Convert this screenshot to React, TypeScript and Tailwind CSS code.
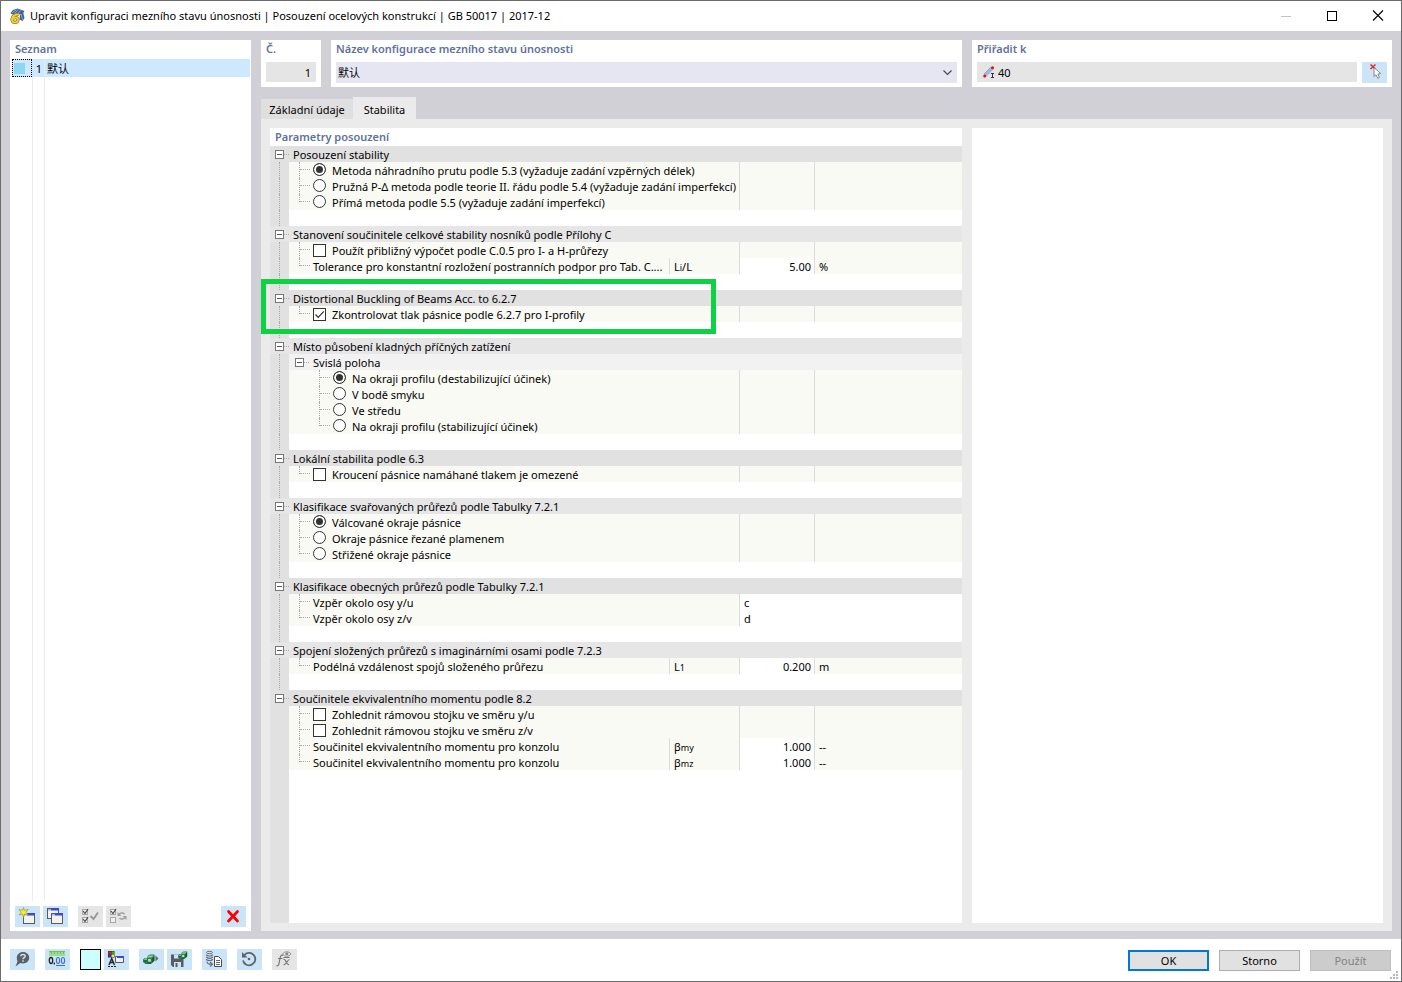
import React, { useState } from 'react';

type Control = 'radio' | 'check' | 'value' | 'wide' | 'node';

type Item = {
  kind: Control;
  label: string;
  on?: boolean;
  depth?: 1 | 2;
  last?: boolean;
  symbol?: React.ReactNode;
  value?: string;
  unit?: string;
};

type Group = { title: string; items: Item[]; highlighted?: boolean };

const groups: Group[] = [
  {
    title: 'Posouzení stability',
    items: [
      { kind: 'radio', label: 'Metoda náhradního prutu podle 5.3 (vyžaduje zadání vzpěrných délek)', on: true },
      { kind: 'radio', label: 'Pružná P-Δ metoda podle teorie II. řádu podle 5.4 (vyžaduje zadání imperfekcí)' },
      { kind: 'radio', label: 'Přímá metoda podle 5.5 (vyžaduje zadání imperfekcí)', last: true },
    ],
  },
  {
    title: 'Stanovení součinitele celkové stability nosníků podle Přílohy C',
    items: [
      { kind: 'check', label: 'Použít přibližný výpočet podle C.0.5 pro I- a H-průřezy' },
      {
        kind: 'value',
        label: 'Tolerance pro konstantní rozložení postranních podpor pro Tab. C....',
        symbol: <>L<Sub>i</Sub>/L</>,
        value: '5.00',
        unit: '%',
        last: true,
      },
    ],
  },
  {
    title: 'Distortional Buckling of Beams Acc. to 6.2.7',
    highlighted: true,
    items: [{ kind: 'check', label: 'Zkontrolovat tlak pásnice podle 6.2.7 pro I-profily', on: true, last: true }],
  },
  {
    title: 'Místo působení kladných příčných zatížení',
    items: [
      { kind: 'node', label: 'Svislá poloha' },
      { kind: 'radio', depth: 2, label: 'Na okraji profilu (destabilizující účinek)', on: true },
      { kind: 'radio', depth: 2, label: 'V bodě smyku' },
      { kind: 'radio', depth: 2, label: 'Ve středu' },
      { kind: 'radio', depth: 2, label: 'Na okraji profilu (stabilizující účinek)', last: true },
    ],
  },
  {
    title: 'Lokální stabilita podle 6.3',
    items: [{ kind: 'check', label: 'Kroucení pásnice namáhané tlakem je omezené', last: true }],
  },
  {
    title: 'Klasifikace svařovaných průřezů podle Tabulky 7.2.1',
    items: [
      { kind: 'radio', label: 'Válcované okraje pásnice', on: true },
      { kind: 'radio', label: 'Okraje pásnice řezané plamenem' },
      { kind: 'radio', label: 'Střižené okraje pásnice', last: true },
    ],
  },
  {
    title: 'Klasifikace obecných průřezů podle Tabulky 7.2.1',
    items: [
      { kind: 'wide', label: 'Vzpěr okolo osy y/u', value: 'c' },
      { kind: 'wide', label: 'Vzpěr okolo osy z/v', value: 'd', last: true },
    ],
  },
  {
    title: 'Spojení složených průřezů s imaginárními osami podle 7.2.3',
    items: [
      {
        kind: 'value',
        label: 'Podélná vzdálenost spojů složeného průřezu',
        symbol: <>L<Sub>1</Sub></>,
        value: '0.200',
        unit: 'm',
        last: true,
      },
    ],
  },
  {
    title: 'Součinitele ekvivalentního momentu podle 8.2',
    items: [
      { kind: 'check', label: 'Zohlednit rámovou stojku ve směru y/u' },
      { kind: 'check', label: 'Zohlednit rámovou stojku ve směru z/v' },
      { kind: 'value', label: 'Součinitel ekvivalentního momentu pro konzolu', symbol: <>β<Sub>my</Sub></>, value: '1.000', unit: '--' },
      { kind: 'value', label: 'Součinitel ekvivalentního momentu pro konzolu', symbol: <>β<Sub>mz</Sub></>, value: '1.000', unit: '--', last: true },
    ],
  },
];

function Sub({ children }: { children: React.ReactNode }) {
  return <span className="text-[9px]">{children}</span>;
}

function Expander({ label }: { label: string }) {
  return (
    <button
      type="button"
      aria-label={`Sbalit ${label}`}
      className="flex size-[9px] shrink-0 items-center justify-center border border-[#767676] bg-white"
    >
      <span className="h-px w-[5px] bg-[#555]" />
    </button>
  );
}

function Gutter({ line }: { line: boolean }) {
  return (
    <td className="bg-[#e1e1e1] p-0">
      <div className="flex h-4 pl-[9px]">
        {line && <span className="h-4 w-px border-l border-dotted border-[#a8a8a8]" />}
      </div>
    </td>
  );
}

function Branch({ last, deep }: { last?: boolean; deep?: boolean }) {
  return (
    <span className={`flex h-4 shrink-0 ${deep ? 'w-11 pl-[30px]' : 'w-6 pl-[10px]'}`}>
      <span className={`w-0 border-l border-dotted border-[#a8a8a8] ${last ? 'h-2' : 'h-4'}`} />
      <span className="h-2 w-[10px] border-b border-dotted border-[#a8a8a8]" />
    </span>
  );
}

function Toggle({ item, id, name }: { item: Item; id: string; name: string }) {
  if (item.kind === 'radio') {
    return (
      <input
        id={id}
        name={name}
        type="radio"
        defaultChecked={item.on}
        className="mt-px size-[13px] shrink-0 appearance-none rounded-full border border-[#333] bg-white checked:bg-[#333] checked:shadow-[inset_0_0_0_2px_white]"
      />
    );
  }
  return (
    <span className="relative mt-[2px] size-[13px] shrink-0">
      <input
        id={id}
        type="checkbox"
        defaultChecked={item.on}
        className="peer block size-[13px] appearance-none border border-[#333] bg-white"
      />
      <svg viewBox="0 0 13 13" className="pointer-events-none absolute inset-0 hidden size-[13px] peer-checked:block">
        <path d="M2.500 6.500 5.200 9.300 10.800 3.400" fill="none" stroke="#333" strokeWidth="1.200" />
      </svg>
    </span>
  );
}

function ItemRow({ item, id, name, line }: { item: Item; id: string; name: string; line: boolean }) {
  if (item.kind === 'node') {
    return (
      <tr>
        <Gutter line={line} />
        <td colSpan={4} className="bg-[#f2f2f2] p-0">
          <div className="flex h-4 items-center pl-[6px]">
            <Expander label={item.label} />
            <span className="h-0 w-[5px] border-b border-dotted border-[#a8a8a8]" />
            <span className="ml-1 h-4 pt-px">{item.label}</span>
          </div>
        </td>
      </tr>
    );
  }
  const hasToggle = item.kind === 'radio' || item.kind === 'check';
  const wide = item.kind === 'wide';
  const hasValue = item.kind === 'value';
  return (
    <tr className="bg-[#f9faf4]">
      <Gutter line={line} />
      <td colSpan={hasValue ? 1 : 2} className="border-r border-[#dcdcdc] p-0">
        <div className="flex h-4">
          <Branch last={item.last} deep={item.depth === 2} />
          {hasToggle && <Toggle item={item} id={id} name={name} />}
          <label htmlFor={id} className={`pt-px whitespace-nowrap ${hasToggle ? 'pl-[6px]' : ''}`}>
            {item.label}
          </label>
        </div>
      </td>
      {hasValue && (
        <td className="border-r border-[#dcdcdc] p-0">
          <div className="flex h-4 items-baseline pt-px pl-1">{item.symbol}</div>
        </td>
      )}
      {wide ? (
        <td colSpan={2} className="bg-white p-0">
          <input id={id} defaultValue={item.value} className="block h-4 w-full bg-transparent pt-px pl-1" />
        </td>
      ) : (
        <>
          <td className={`border-r border-[#dcdcdc] p-0 ${hasValue ? 'bg-white' : ''}`}>
            {hasValue && (
              <input id={id} defaultValue={item.value} className="block h-4 w-full bg-transparent pt-px pr-[3px] text-right" />
            )}
          </td>
          <td className="p-0">
            <div className="h-4 pt-px pl-1">{item.unit}</div>
          </td>
        </>
      )}
    </tr>
  );
}

function GroupRows({ group, index }: { group: Group; index: number }) {
  const finalGroup = index === groups.length - 1;
  const shade = index % 2 === 0 ? 'bg-[#e1e1e1]' : 'bg-[#e6e6e6]';
  return (
    <tbody>
      <tr className={shade}>
        <th scope="rowgroup" colSpan={5} className="relative p-0 text-left font-normal">
          <div className="flex h-4 items-center pl-[5px]">
            <Expander label={group.title} />
            <span className="h-0 w-[5px] border-b border-dotted border-[#a8a8a8]" />
            <span className="ml-1 h-4 pt-px">{group.title}</span>
          </div>
          {group.highlighted && (
            <span className="pointer-events-none absolute -top-[11px] -left-[9px] h-[55px] w-[455px] border-5 border-[#0dd243]" />
          )}
        </th>
      </tr>
      {group.items.map((item, i) => (
        <ItemRow key={i} item={item} id={`param-${index}-${i}`} name={`group-${index}`} line={!finalGroup} />
      ))}
      {!finalGroup && (
        <tr>
          <Gutter line />
          <td colSpan={4} className="p-0" />
        </tr>
      )}
    </tbody>
  );
}

function IconButton({
  label,
  children,
  disabled,
  className = '',
}: {
  label: string;
  children: React.ReactNode;
  disabled?: boolean;
  className?: string;
}) {
  return (
    <button
      type="button"
      aria-label={label}
      disabled={disabled}
      className={`flex h-[21px] w-[25px] shrink-0 items-center justify-center ${disabled ? 'bg-[#e5e5e5]' : 'bg-[#cce4f7]'} ${className}`}
    >
      <svg viewBox="0 0 25 21" className="h-[21px] w-[25px]" fill="none">
        {children}
      </svg>
    </button>
  );
}

function WindowShape({ x, y }: { x: number; y: number }) {
  return (
    <g>
      <rect x={x + 0.5} y={y + 0.5} width="11" height="10" fill="#f2f2f2" stroke="#5a5a5a" />
      <rect x={x + 1} y={y + 1} width="3" height="1.500" fill="#a8b4e8" />
      <rect x={x + 4} y={y} width="8" height="2.500" fill="#3a48dc" />
    </g>
  );
}

function TickBox({ y, ticked }: { y: number; ticked?: boolean }) {
  return (
    <g>
      <rect x="4.500" y={y + 0.5} width="5" height="5" fill="#efefef" stroke="#a8a8a8" />
      {ticked && <path d={`M5 ${y + 2}l2 2.500 3-4.500`} stroke="#4a4a4a" strokeWidth="1.200" />}
    </g>
  );
}

function GreenBlock({ x, y, scale = 1 }: { x: number; y: number; scale?: number }) {
  return (
    <g transform={`translate(${x} ${y}) scale(${scale})`}>
      <path d="M0 5.500 2 4h2l1-2.500L7 .5h4.500v6L8 10H2.500L0 8z" fill="#2f7d4b" />
      <path d="m4.500 3.500 1.500-2h4.500L9 3.500zM.8 5.800l1.500-1.200h2L3.500 6z" fill="#93cfa3" />
      <path d="m9.300 4 2-2v4.500l-2 2.500z" fill="#1a5331" />
      <path d="M5.200 5h2.600v2.600H5.200z" fill="#bfe6c8" />
      <path d="M1.500 7h2M4.500 9h3.500" stroke="#174a2b" />
    </g>
  );
}

function AppIcon() {
  const six =
    'M10 6.500C6.200 6 3 8 3 11.200c0 2 1.200 3.200 2.900 3.200 1.800 0 3-1.100 3-2.600 0-1.400-1.100-2.300-2.400-2.300-1.300 0-2.400.8-3 1.900';
  return (
    <svg viewBox="0 0 16 16" className="size-4" fill="none">
      <path d="M1.500 5 4 2 8.500.5 15.500 3l-1.200 2 1.200 5-2 3-3-1.500.5-5-4-1L3 6.500z" fill="#41639b" />
      <path d="m3 4.800 4.500-3M5.500 5.200l4-3.500M8.500 5.500l3.500-3M12 6l1.500 5.500M10.500 6.500l2 .2" stroke="#a9bddb" strokeWidth=".7" />
      <path d={six} stroke="#77682c" strokeWidth="3.200" />
      <path d={six} stroke="#f5cd33" strokeWidth="2" />
    </svg>
  );
}

const caption = 'text-[11px] leading-[18px] font-semibold text-[#5f7299]';

function TitleBar() {
  return (
    <header className="flex h-[30px] shrink-0 items-center bg-white pl-2">
      <AppIcon />
      <h1 className="ml-[5px] flex-1 font-normal">
        Upravit konfiguraci mezního stavu únosnosti | Posouzení ocelových konstrukcí | GB 50017 | 2017-12
      </h1>
      <button type="button" aria-label="Minimalizovat" disabled className="flex h-full w-[46px] items-center justify-center">
        <span className="h-px w-[10px] bg-[#c4c4c4]" />
      </button>
      <button type="button" aria-label="Maximalizovat" className="flex h-full w-[46px] items-center justify-center">
        <span className="size-[10px] border border-black" />
      </button>
      <button type="button" aria-label="Zavřít" className="flex h-full w-[46px] items-center justify-center">
        <svg viewBox="0 0 12 12" className="size-3">
          <path d="m1 .5 10 10m0-10-10 10" stroke="#000" strokeWidth="1.100" />
        </svg>
      </button>
    </header>
  );
}

function ListPanel() {
  return (
    <aside className="flex w-[241px] shrink-0 flex-col bg-white">
      <h2 className={`${caption} h-[19px] pl-[5px]`}>Seznam</h2>
      <ul className="mr-px ml-[2px]">
        <li className="grid h-[18px] grid-cols-[21px_12px_1fr] items-center bg-[#cde8ff]">
          <span className="flex h-[18px] w-5 items-center border border-dotted border-black pl-px">
            <span className="size-[11px] bg-[#8fd6f4]" />
          </span>
          <span className="flex h-[18px] items-center justify-end border-r border-[#e4eef6] pt-px pr-[2px]">1</span>
          <span className="pt-px pl-[2px]">默认</span>
        </li>
      </ul>
      <div className="ml-[2px] grid flex-1 grid-cols-[21px_12px_1fr]">
        <span className="border-r border-[#ebebeb]" />
        <span className="border-r border-[#ebebeb]" />
      </div>
      <div className="flex px-[5px] pt-[5px] pb-1">
        <IconButton label="Nový">
          <WindowShape x={8} y={7} />
          <path
            d="m8.500 1.500.9 2.900 3.800-1-2.300 2.800 2.300 2.700-3.700-.9-1 3.500-1-3.500L4 9l2.200-2.800L4 3.500l3.600.9z"
            fill="#f8f02a"
            stroke="#8f8a2c"
            strokeWidth=".6"
          />
        </IconButton>
        <IconButton label="Kopírovat" className="ml-[3px]">
          <WindowShape x={4} y={2} />
          <WindowShape x={8} y={7} />
        </IconButton>
        <IconButton label="Vybrat vše" disabled className="ml-[10px]">
          <TickBox y={3} ticked />
          <TickBox y={11} ticked />
          <path d="m12.500 10 3 3 4.500-6.500" stroke="#999" strokeWidth="2" />
        </IconButton>
        <IconButton label="Obrátit výběr" disabled className="ml-[3px]">
          <TickBox y={3} ticked />
          <TickBox y={11} />
          <path d="M13 8.500c1.500-2 4-2 5.500-.5M19 11.500c-1.500 2-4 2-5.500.5" stroke="#a0a0a0" strokeWidth="1.500" />
          <path d="M11.500 6v4h4zM20.500 14v-4h-4z" fill="#a0a0a0" />
        </IconButton>
        <IconButton label="Smazat" className="ml-auto">
          <path d="m7.500 5.500 9 9.500m0-9.500-9 9.500" stroke="#f00" strokeWidth="2.800" strokeLinecap="round" />
        </IconButton>
      </div>
    </aside>
  );
}

function HeaderFields() {
  return (
    <div className="grid grid-cols-[60px_1fr_420px] gap-[10px]">
      <div className="bg-white px-[5px] pb-1">
        <label htmlFor="number" className={`${caption} block h-[22px]`}>Č.</label>
        <input id="number" readOnly value="1" className="block h-5 w-full bg-[#e5e5e5] pt-px pr-[5px] text-right" />
      </div>
      <div className="bg-white px-[5px] pb-1">
        <label htmlFor="name" className={`${caption} block h-[22px]`}>Název konfigurace mezního stavu únosnosti</label>
        <div className="relative">
          <select id="name" className="block h-[21px] w-full appearance-none bg-[#e6e6f2] pl-[2px]">
            <option>默认</option>
          </select>
          <svg viewBox="0 0 9 6" className="pointer-events-none absolute top-2 right-[5px] h-[6px] w-[9px]">
            <path d="m.5.5 4 4 4-4" fill="none" stroke="#444" strokeWidth="1.100" />
          </svg>
        </div>
      </div>
      <div className="bg-white px-[5px] pb-1">
        <label htmlFor="assign" className={`${caption} block h-[22px]`}>Přiřadit k</label>
        <div className="flex gap-[5px]">
          <div className="flex h-5 flex-1 items-center bg-[#e5e5e5] pl-[6px]">
            <svg viewBox="0 0 12 12" className="size-3">
              <path d="M2 9.500 9.500 2" stroke="#9cbbe0" strokeWidth="3.400" />
              <path d="M1 8 8 1" stroke="#7c8ba3" strokeWidth=".6" />
              <circle cx="1.700" cy="10" r="1.500" fill="#e01010" />
              <circle cx="9.500" cy="1.700" r="1.500" fill="#e01010" />
              <path d="M8 7.500h3M8 11.500h3M9.500 7.500v4" stroke="#333" />
            </svg>
            <input id="assign" readOnly value="40" className="ml-[3px] h-5 flex-1 bg-transparent pt-px" />
          </div>
          <IconButton label="Vybrat objekty">
            <path d="m8.500 2.500 5 4.500m0-4.500-5 4.500" stroke="#e32222" strokeWidth="1.500" />
            <path d="M12 5.500v9l2-1.800 1.800 3.600 1.700-.8-1.700-3.500 2.900-.4z" fill="#fff" stroke="#808080" strokeWidth=".9" />
          </IconButton>
        </div>
      </div>
    </div>
  );
}

function Footer() {
  const action = 'h-[21px] w-[81px] pt-px';
  return (
    <footer className="relative flex h-[42px] shrink-0 items-start bg-white pt-[10px] pr-[10px] pl-[9px]">
      <IconButton label="Nápověda">
        <path
          d="M13 3c3.500 0 6.200 2.500 6.200 5.800s-2.700 5.700-6.200 5.700c-1 0-1.900-.2-2.700-.5L5.500 17.500l2-5C7 11.400 6.800 10.200 6.800 8.800 6.800 5.500 9.500 3 13 3z"
          fill="#5b6067"
        />
        <path d="M10.800 7.300c0-1.200.9-1.900 2.200-1.900s2.200.7 2.200 1.800c0 1.500-2.200 1.500-2.200 3.100M13 11.300v1.400" stroke="#cce4f7" strokeWidth="1.500" />
      </IconButton>
      <IconButton label="Jednotky a desetinná místa" className="ml-[10px]">
        <path d="M4 2h16v5H4z" fill="#9be08b" />
        <path d="M4 2.500h16M6.500 3v2M9.500 3v2M12.500 3v2M15.500 3v2M18.500 3v2" stroke="#6cae60" strokeWidth=".8" />
        <path d="M11 16.500h9" stroke="#3d6fd0" />
        <ellipse cx="6" cy="11.500" rx="1.700" ry="3" stroke="#222" strokeWidth="1.300" />
        <path d="M9.300 13.500v2" stroke="#222" strokeWidth="1.300" />
        <ellipse cx="13" cy="11.500" rx="1.600" ry="3" stroke="#3d6fd0" strokeWidth="1.100" />
        <ellipse cx="18" cy="11.500" rx="1.600" ry="3" stroke="#3d6fd0" strokeWidth="1.100" />
      </IconButton>
      <button type="button" aria-label="Barva" className="ml-[10px] size-[21px] border border-black bg-[#ccffff]" />
      <IconButton label="Zobrazení" className="ml-[3px]">
        <path d="M4 2h6.500v6.500H4z" fill="#333" />
        <path d="M4.500 2.500h2.500v2.500H4.500z" fill="#f01818" />
        <path d="M7.500 2.500h2.500v2.500H7.500z" fill="#20b020" />
        <path d="M4.500 5.500h2.500v2.500H4.500z" fill="#2838f0" />
        <path d="M7.500 5.500h2.500v2.500H7.500z" fill="#f8e820" />
        <path d="m5 16 2.700-6.500L10.500 16M6 13.500h3.500" stroke="#222" strokeWidth="1.400" />
        <path d="M4 17.500h9" stroke="#222" strokeDasharray="2 1" />
        <path d="M11.500 7.500h8v6h-8z" fill="#eef1f8" stroke="#55585f" />
        <path d="M13 8h7" stroke="#3a48dc" strokeWidth="2" />
      </IconButton>
      <IconButton label="Načíst" className="ml-[10px]">
        <GreenBlock x={4} y={5} />
        <path d="m16.500 6.500 3 3-3 3z" fill="#5f6469" />
      </IconButton>
      <IconButton label="Uložit jako výchozí" className="ml-[3px]">
        <path d="M4 5.500h12.500V18H6l-2-2z" fill="#585c61" />
        <path d="M7 5.500h5v4H7zM7 13h7v5H7z" fill="#cce4f7" />
        <path d="M8.500 14h2v4h-2z" fill="#585c61" />
        <GreenBlock x={11} y={2} scale={0.8} />
      </IconButton>
      <IconButton label="Kopírovat do schránky" className="ml-[10px]">
        <ellipse cx="7.500" cy="3.500" rx="3" ry="1.200" stroke="#666a6e" />
        <path
          d="M4.500 5.500c0 2 6 2 6 0M4.500 7.800c0 2 6 2 6 0M4.500 10c0 2 6 2 6 0"
          stroke="#666a6e"
          strokeWidth="1.200"
        />
        <path d="M5 12.500c0 2 1 2.800 4.500 2.800M8 13l2.500 2.300L8 17.500" stroke="#666a6e" strokeWidth="1.100" />
        <path d="M12.500 7.500h4l3 3v7h-7z" fill="#fff" stroke="#4a4a4a" />
        <path d="M14 11.500h4M14 13.500h4M14 15.500h4" stroke="#666" />
      </IconButton>
      <IconButton label="Obnovit výchozí" className="ml-[10px]">
        <path d="M7 6.500A6.200 6.200 0 1 1 6 11.500" stroke="#5f6469" strokeWidth="1.800" />
        <path d="M5 3v5.500h5.500z" fill="#5f6469" />
        <circle cx="12" cy="10" r="1.300" fill="#5f6469" />
      </IconButton>
      <IconButton label="Vzorec" disabled className="ml-[10px]">
        <path d="M11 6.500c-1.800-1-2.500.5-3 3l-1 5c-.4 2-1.200 2.800-2.500 2M6 9.500h4.500" stroke="#777" strokeWidth="1.200" />
        <path d="M11.500 10.500c3-1 2.500 6 5.500 5M17.500 10.500c-2 0-3.500 5.500-6 5.500M11.500 8.500h6" stroke="#777" strokeWidth="1.200" />
        <path d="M10.500 5c2-3 6.500-3 8.500 0-2 3-6.500 3-8.500 0z" stroke="#888" strokeWidth=".9" />
        <circle cx="14.800" cy="4.800" r="1.500" fill="#888" />
      </IconButton>
      <div className="mt-px ml-auto flex gap-[10px]">
        <button type="button" className={`${action} border-2 border-[#0078d7] bg-[#e1e1e1]`}>
          <span className="block leading-4">OK</span>
        </button>
        <button type="button" className={`${action} border border-[#adadad] bg-[#e1e1e1]`}>Storno</button>
        <button type="button" disabled className={`${action} border border-[#bfbfbf] bg-[#cccccc] text-[#838383]`}>Použít</button>
      </div>
      <svg viewBox="0 0 8 8" className="absolute right-[3px] bottom-[2px] size-2" fill="#b8b8b8">
        <path d="M6 0h2v2H6zM3 3h2v2H3zM6 3h2v2H6zM0 6h2v2H0zM3 6h2v2H3zM6 6h2v2H6z" />
      </svg>
    </footer>
  );
}

export default function App() {
  const [tab, setTab] = useState('Stabilita');
  return (
    <div className="flex min-h-screen flex-col border border-[#6b6a6e] bg-[#d1d0d6] font-['Noto_Sans','Noto_Sans_CJK_SC',sans-serif] text-[11px] leading-4 text-black">
      <TitleBar />
      <main className="flex flex-1 gap-[10px] px-[9px] pt-[9px] pb-2">
        <ListPanel />
        <div className="flex min-w-0 flex-1 flex-col">
          <HeaderFields />
          <div role="tablist" className="mt-[10px] flex h-[22px] items-end">
            {['Základní údaje', 'Stabilita'].map((name) => (
              <button
                key={name}
                type="button"
                role="tab"
                aria-selected={tab === name}
                onClick={() => setTab(name)}
                className={tab === name ? 'h-[22px] w-[63px] bg-[#ebebeb] pt-1' : 'h-5 w-[92px] bg-[#dfdfdf] pt-[2px]'}
              >
                {name}
              </button>
            ))}
          </div>
          <div className="flex flex-1 gap-[10px] bg-[#ebebeb] px-[9px] pt-[9px] pb-2">
            <section className="flex min-w-0 flex-1 flex-col bg-white">
              <h2 className={`${caption} pl-[5px]`}>Parametry posouzení</h2>
              <table className="w-full table-fixed border-separate border-spacing-0">
                <colgroup>
                  <col className="w-[19px]" />
                  <col className="w-[381px]" />
                  <col className="w-[70px]" />
                  <col className="w-[75px]" />
                  <col />
                </colgroup>
                {groups.map((group, i) => (
                  <GroupRows key={group.title} group={group} index={i} />
                ))}
              </table>
              <div className="w-[19px] flex-1 bg-[#e1e1e1]" />
            </section>
            <section aria-label="Náhled" className="w-[411px] shrink-0 bg-white" />
          </div>
        </div>
      </main>
      <Footer />
    </div>
  );
}
